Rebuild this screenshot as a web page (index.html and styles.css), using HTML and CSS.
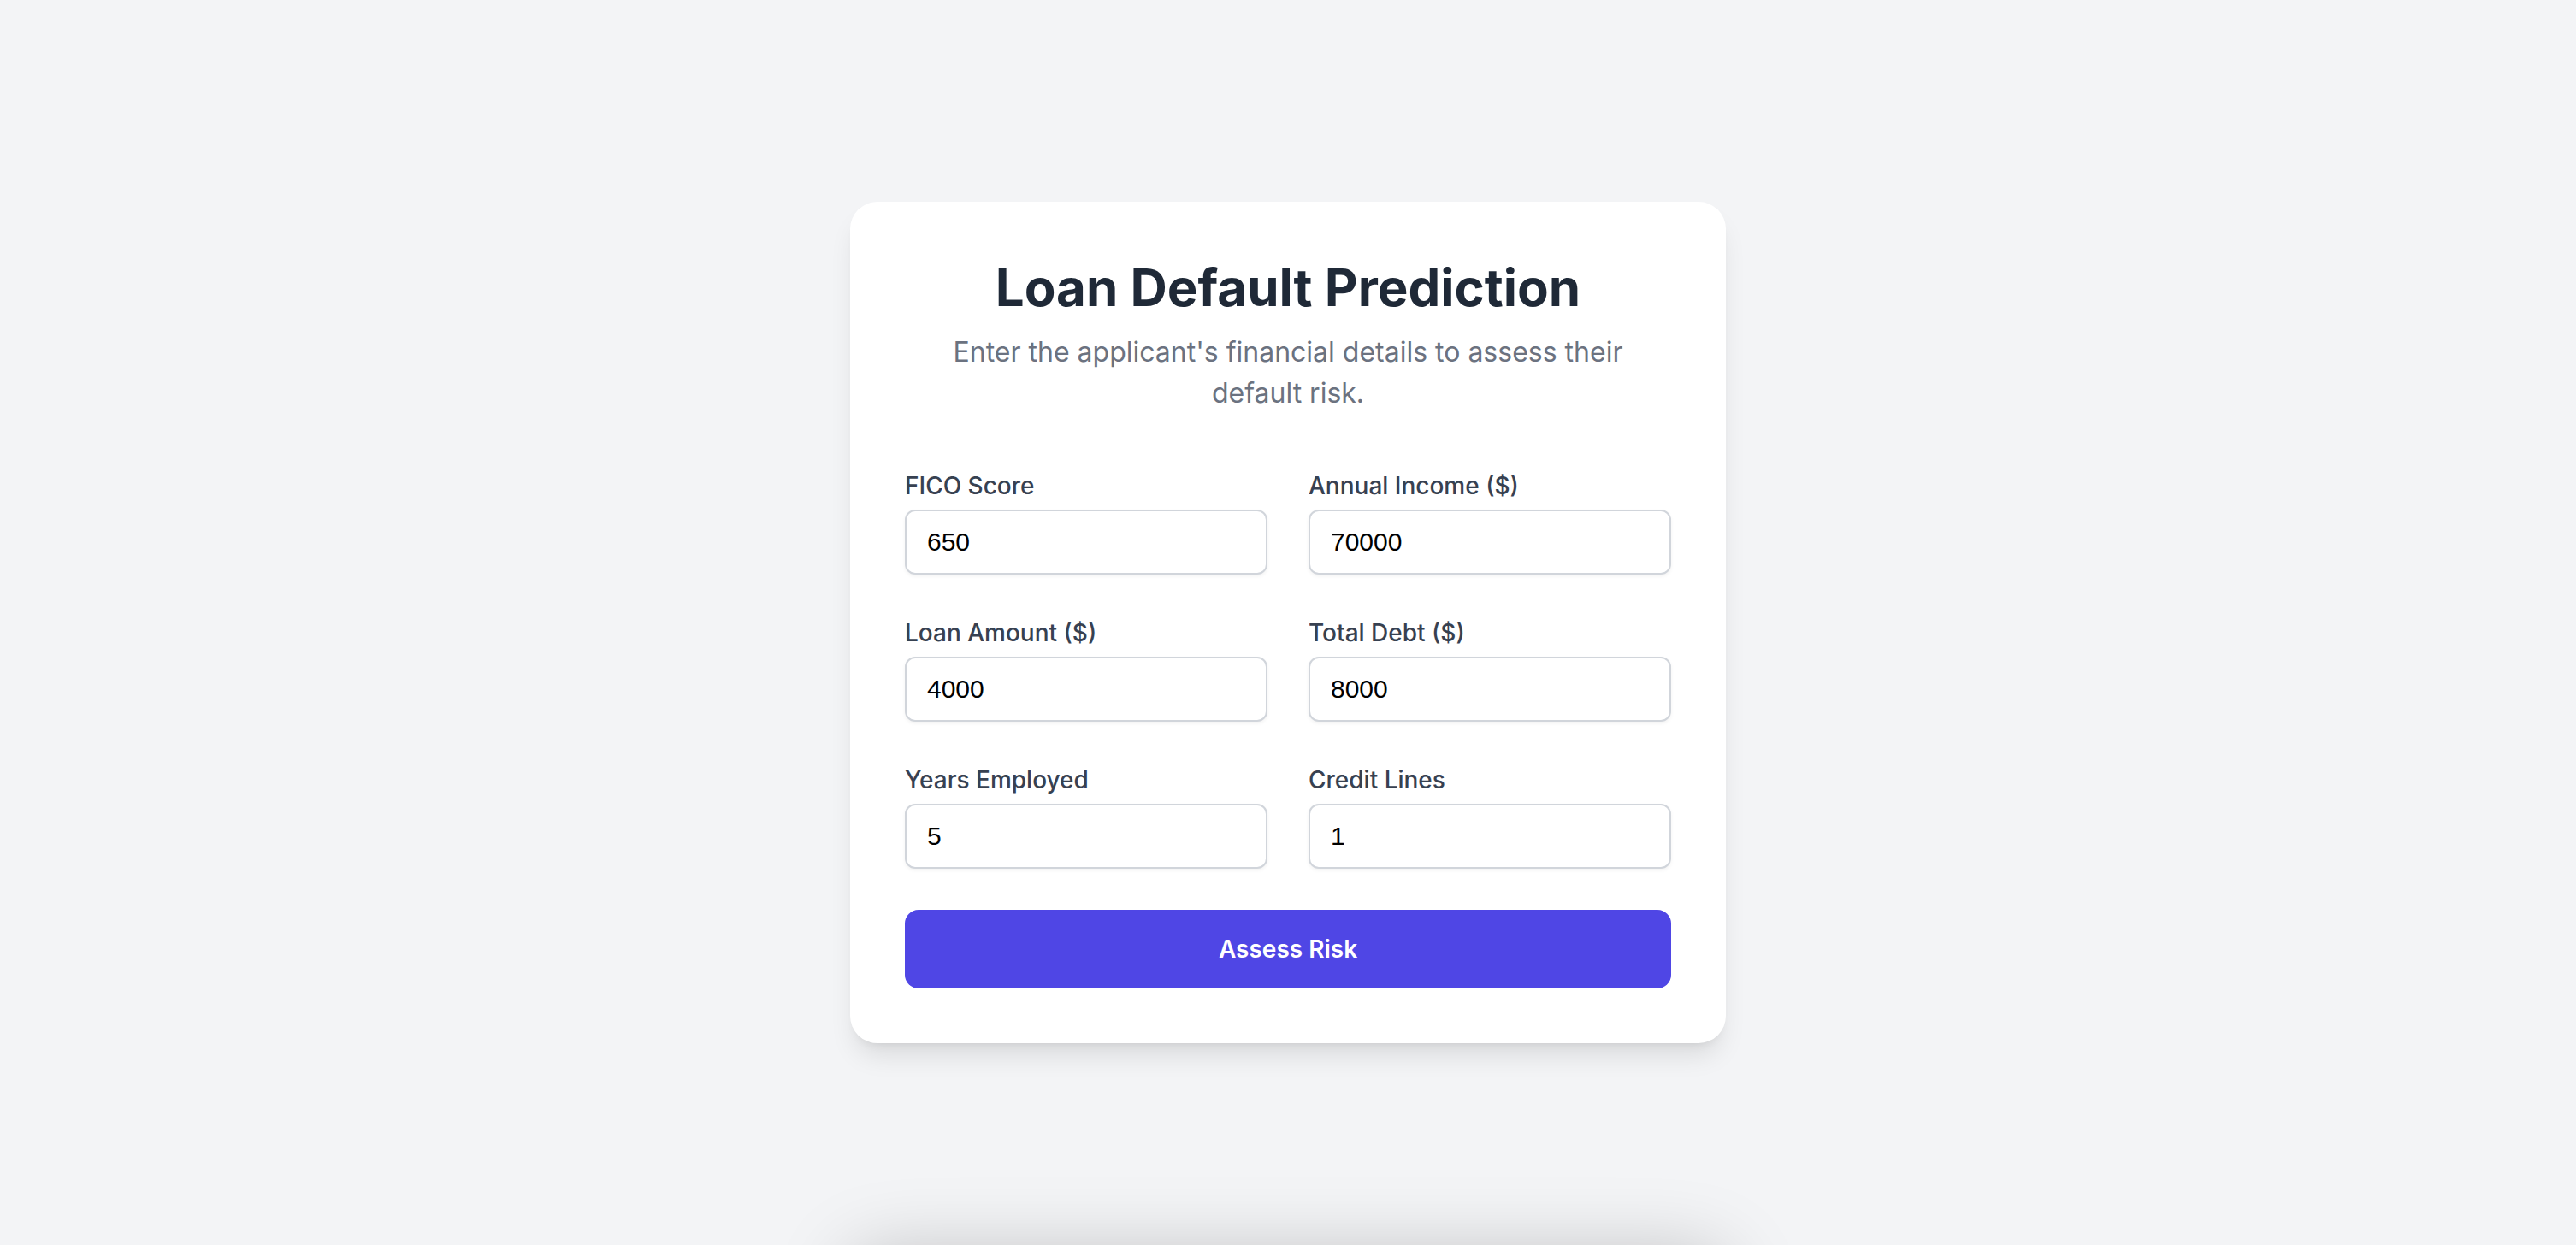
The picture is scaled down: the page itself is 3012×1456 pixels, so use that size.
FILE: index.html
```html
<!DOCTYPE html>
<html lang="en">
<head>
<meta charset="utf-8">
<title>Loan Default Prediction</title>
<link rel="stylesheet" href="styles.css">
</head>
<body>
<main class="page">
  <div class="card">
    <h1 class="title">Loan Default Prediction</h1>
    <p class="subtitle">Enter the applicant's financial details to assess their default risk.</p>
    <form class="form">
      <div class="grid">
        <div class="field">
          <label class="label" for="fico">FICO Score</label>
          <input class="input" id="fico" type="text" value="650">
        </div>
        <div class="field">
          <label class="label" for="income">Annual Income ($)</label>
          <input class="input" id="income" type="text" value="70000">
        </div>
        <div class="field">
          <label class="label" for="loan">Loan Amount ($)</label>
          <input class="input" id="loan" type="text" value="4000">
        </div>
        <div class="field">
          <label class="label" for="debt">Total Debt ($)</label>
          <input class="input" id="debt" type="text" value="8000">
        </div>
        <div class="field">
          <label class="label" for="years">Years Employed</label>
          <input class="input" id="years" type="text" value="5">
        </div>
        <div class="field">
          <label class="label" for="lines">Credit Lines</label>
          <input class="input" id="lines" type="text" value="1">
        </div>
      </div>
      <button class="submit" type="button">Assess Risk</button>
    </form>
  </div>
</main>
<section class="result"></section>
</body>
</html>
```
FILE: styles.css
```css
html {
  overflow: hidden;
}
html, body {
  margin: 0;
  padding: 0;
}
body {
  background: #f3f4f6;
  font-family: Inter, "Noto Sans", sans-serif;
  color: #1f2937;
}
.page {
  min-height: 1456px;
  display: flex;
  align-items: center;
  justify-content: center;
}
.card {
  width: 1024px;
  box-sizing: border-box;
  padding: 64px;
  background: #ffffff;
  border-radius: 32px;
  box-shadow: 0 20px 30px -6px rgba(0, 0, 0, 0.1), 0 8px 12px -8px rgba(0, 0, 0, 0.1);
}
.title {
  margin: 0 0 16px;
  font-size: 60px;
  line-height: 72px;
  font-weight: 700;
  text-align: center;
  color: #1f2937;
}
.subtitle {
  margin: 0 0 64px;
  font-size: 32px;
  line-height: 48px;
  text-align: center;
  color: #6b7280;
}
.form {
  display: flex;
  flex-direction: column;
  gap: 48px;
}
.grid {
  display: grid;
  grid-template-columns: 1fr 1fr;
  gap: 48px;
}
.field {
  display: flex;
  flex-direction: column;
}
.label {
  display: block;
  font-size: 28px;
  line-height: 40px;
  font-weight: 500;
  color: #374151;
  margin-bottom: 8px;
}
.input {
  width: 100%;
  height: 76px;
  box-sizing: border-box;
  border: 2px solid #d1d5db;
  border-radius: 12px;
  padding: 0 24px;
  font-family: "Liberation Sans", Arial, sans-serif;
  font-size: 30px;
  color: #000;
  background: #fff;
  box-shadow: 0 2px 4px rgba(0, 0, 0, 0.05);
  outline: none;
}
.submit {
  width: 100%;
  height: 92px;
  border: none;
  border-radius: 16px;
  background: #4f46e5;
  color: #ffffff;
  font-family: Inter, "Noto Sans", sans-serif;
  font-size: 28px;
  font-weight: 600;
  cursor: pointer;
}
.result {
  width: 1024px;
  height: 400px;
  margin: 12px auto 0;
  border-radius: 32px;
  background: #f3f4f6;
  box-shadow: 0 0 90px rgba(0, 0, 0, 0.22);
}
```
